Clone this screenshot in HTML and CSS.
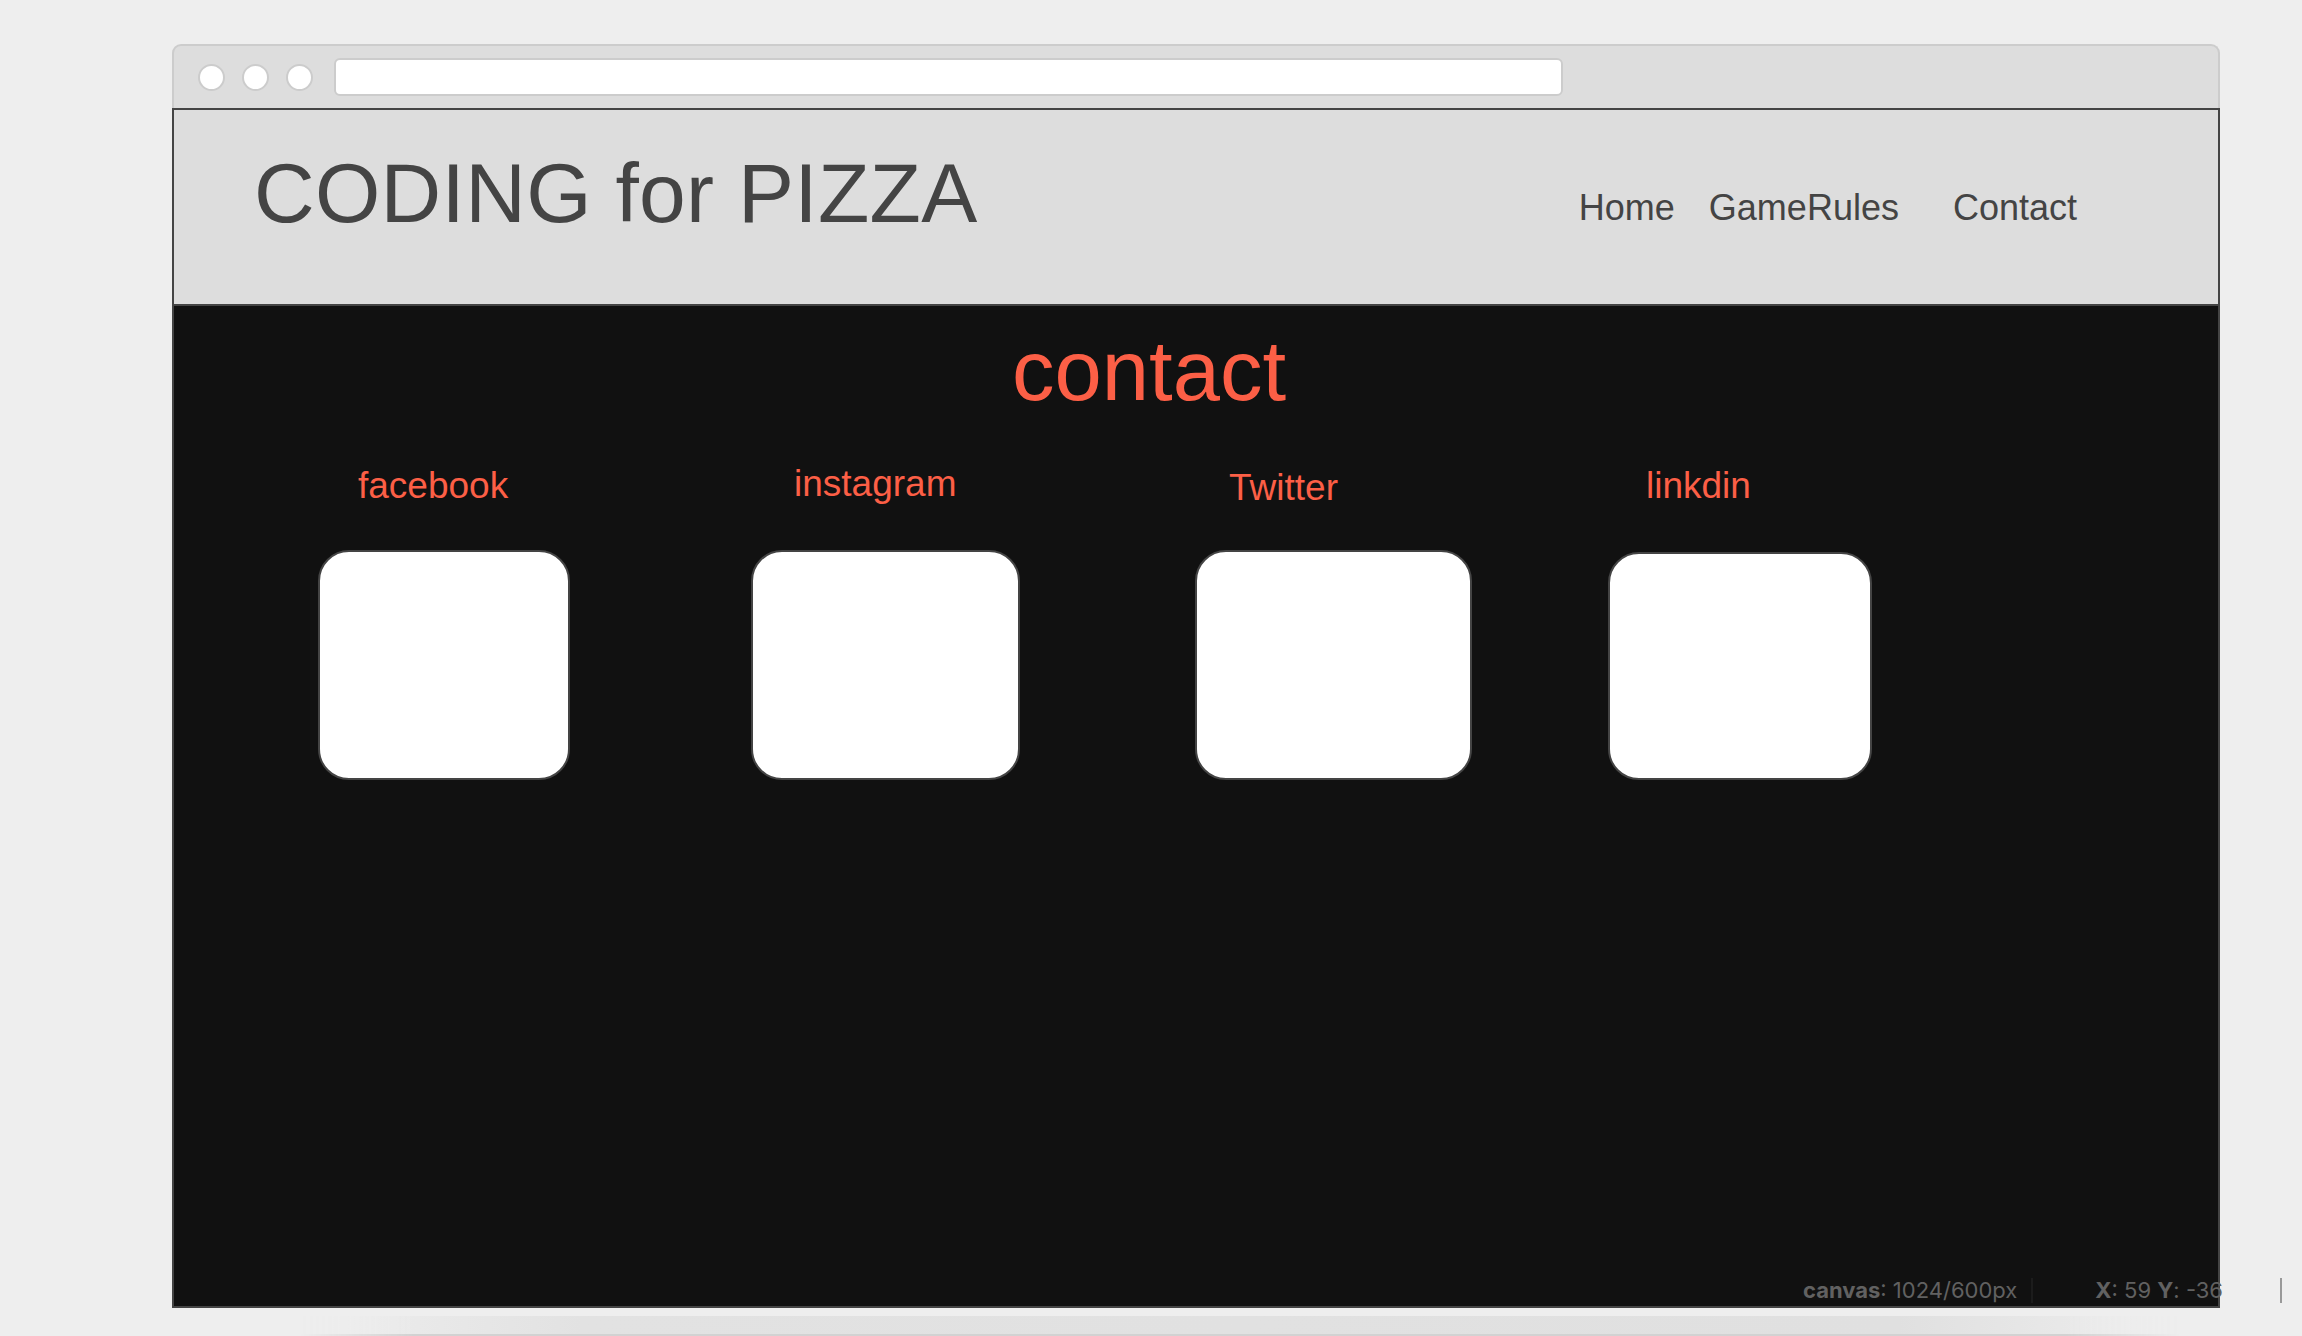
FILE: index.html
```html
<!DOCTYPE html>
<html lang="en">
<head>
<meta charset="utf-8">
<title>CODING for PIZZA - contact</title>
<link rel="stylesheet" href="styles.css">
</head>
<body>
<div class="window">
  <div class="titlebar">
    <span class="dot"></span>
    <span class="dot"></span>
    <span class="dot"></span>
    <div class="url"></div>
  </div>
  <div class="canvas">
    <header class="site-header">
      <h1 class="logo">CODING for PIZZA</h1>
      <nav class="nav">
        <a class="nav-link nav-home">Home</a>
        <a class="nav-link nav-rules">GameRules</a>
        <a class="nav-link nav-contact">Contact</a>
      </nav>
    </header>
    <main class="content">
      <h2 class="heading">contact</h2>
      <div class="socials">
        <div class="social social-fb">
          <span class="label">facebook</span>
          <div class="card"></div>
        </div>
        <div class="social social-ig">
          <span class="label">instagram</span>
          <div class="card"></div>
        </div>
        <div class="social social-tw">
          <span class="label">Twitter</span>
          <div class="card"></div>
        </div>
        <div class="social social-li">
          <span class="label">linkdin</span>
          <div class="card"></div>
        </div>
      </div>
    </main>
  </div>
</div>
<div class="statusbar">
  <span class="info"><b>canvas</b>: 1024/600px</span>
  <span class="sep sep-dark"></span>
  <span class="coords"><b>X</b>: 59 <b>Y</b>: -36</span>
  <span class="sep sep-light"></span>
</div>
<div class="bottom-shadow"></div>
</body>
</html>
```

FILE: styles.css
```css
html, body {
  margin: 0;
  padding: 0;
}

body {
  background: #eeeeee;
  width: 2302px;
  height: 1336px;
  overflow: hidden;
  position: relative;
  font-family: "Liberation Sans", Arial, sans-serif;
}

.window {
  margin: 44px 0 0 172px;
  width: 2048px;
}

.titlebar {
  box-sizing: border-box;
  height: 64px;
  background: #dddddd;
  border: 2px solid #cccccc;
  border-bottom: none;
  border-radius: 9px 9px 0 0;
  display: flex;
  align-items: center;
  padding-left: 24px;
}

.dot {
  box-sizing: border-box;
  width: 27px;
  height: 27px;
  border-radius: 50%;
  background: #ffffff;
  border: 2px solid #cccccc;
  margin-right: 17px;
}

.dot:nth-child(3) {
  margin-right: 21px;
}

.url {
  box-sizing: border-box;
  width: 1229px;
  height: 38px;
  background: #ffffff;
  border: 2px solid #cccccc;
  border-radius: 6px;
}

.canvas {
  box-sizing: border-box;
  height: 1200px;
  border: 2px solid #444444;
  background: #111111;
}

.site-header {
  box-sizing: border-box;
  height: 196px;
  background: #dddddd;
  border-bottom: 2px solid #444444;
  display: flex;
  align-items: flex-start;
  padding-left: 80px;
  padding-right: 141px;
}

.logo {
  margin: 0;
  padding-top: 41px;
  font-size: 84px;
  letter-spacing: 0.3px;
  line-height: 1;
  font-weight: normal;
  color: #444444;
}

.nav {
  margin-left: auto;
  padding-top: 80px;
  display: flex;
}

.nav-link {
  font-size: 36px;
  line-height: 1;
  color: #444444;
  text-decoration: none;
}

.nav-home {
  margin-right: 34px;
}

.nav-rules {
  margin-right: 54px;
}

.content {
  padding-top: 22px;
}

.heading {
  margin: 0;
  padding-left: 838px;
  font-size: 85px;
  line-height: 1;
  font-weight: normal;
  color: #fc5f46;
}

.socials {
  display: flex;
  align-items: flex-start;
  padding-left: 144px;
}

.social {
  display: flex;
  flex-direction: column;
  align-items: flex-start;
}

.label {
  display: block;
  font-size: 37px;
  line-height: 1;
  color: #fc5f46;
}

.card {
  box-sizing: border-box;
  background: #ffffff;
  border: 2px solid #444444;
  border-radius: 31px;
}

.social-fb .label { margin: 54px 0 0 40px; }
.social-fb .card { margin-top: 46px; width: 252px; height: 230px; }

.social-ig { margin-left: 181px; }
.social-ig .label { margin: 52px 0 0 43px; }
.social-ig .card { margin-top: 48px; width: 269px; height: 230px; }

.social-tw { margin-left: 175px; }
.social-tw .label { margin: 56px 0 0 34px; }
.social-tw .card { margin-top: 44px; width: 277px; height: 230px; }

.social-li { margin-left: 136px; }
.social-li .label { margin: 54px 0 0 38px; }
.social-li .card { margin-top: 48px; width: 264px; height: 228px; }

.statusbar {
  position: absolute;
  left: 1803px;
  top: 1278px;
  height: 25px;
  display: flex;
  align-items: center;
  font-family: "Inter", "Liberation Sans", sans-serif;
  font-size: 22px;
  line-height: 25px;
  color: #616161;
  white-space: nowrap;
}

.statusbar b {
  font-weight: bold;
}

.info {
  margin-right: 14px;
}

.sep {
  width: 2px;
  height: 25px;
}

.sep-dark {
  background: #1c1c1c;
  margin-right: 62px;
}

.coords {
  margin-right: 57px;
}

.sep-light {
  background: #999999;
}

.bottom-shadow {
  position: absolute;
  left: 300px;
  top: 1316px;
  width: 1880px;
  height: 18px;
  border-bottom: 2px solid #d2d2d2;
  background: linear-gradient(to right, #eeeeee 0%, #e2e2e2 15%, #e0e0e0 85%, #eeeeee 100%);
  -webkit-mask-image: linear-gradient(to right, transparent 0%, #000 6%, #000 94%, transparent 100%);
  mask-image: linear-gradient(to right, transparent 0%, #000 6%, #000 94%, transparent 100%);
}
```
